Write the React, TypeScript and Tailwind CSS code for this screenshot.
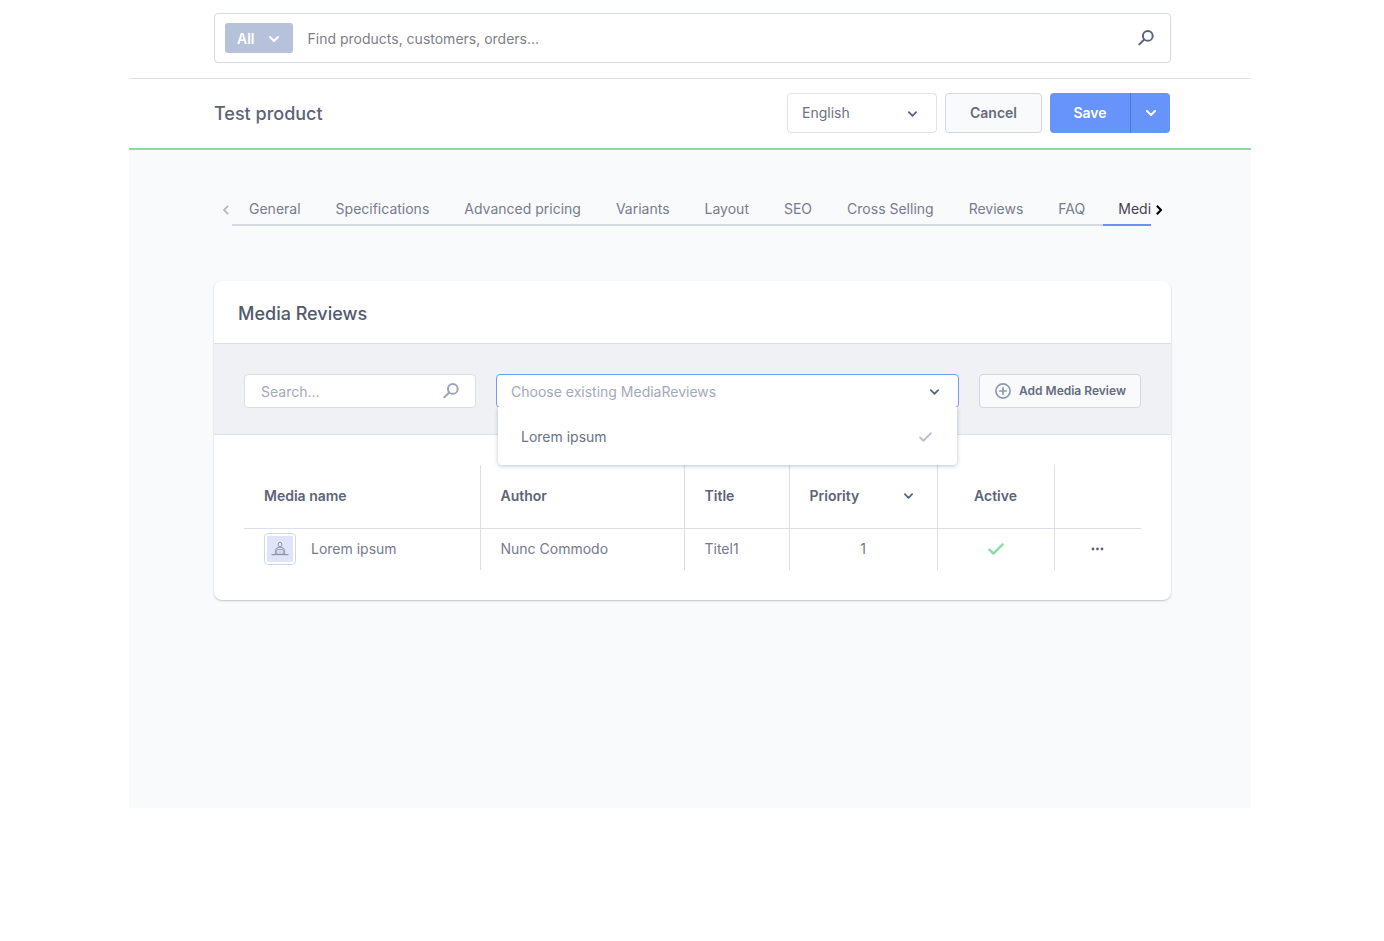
import { useState } from 'react';

type IconProps = {
  className?: string;
};

const TABS = [
  'General',
  'Specifications',
  'Advanced pricing',
  'Variants',
  'Layout',
  'SEO',
  'Cross Selling',
  'Reviews',
  'FAQ',
  'Media Reviews',
];

const ROWS = [
  {
    id: 1,
    name: 'Lorem ipsum',
    author: 'Nunc Commodo',
    title: 'Titel1',
    priority: 1,
    active: true,
  },
];

// =========================
// ICONS
// =========================
function ChevronIcon({ className = '' }: IconProps) {
  return (
    <svg
      viewBox="0 0 10 6"
      className={`pointer-events-none ${className}`}
      fill="none"
      stroke="currentColor"
      strokeWidth="2"
      strokeLinecap="round"
      strokeLinejoin="round"
      aria-hidden="true"
    >
      <path d="M1 1l4 4 4-4" />
    </svg>
  );
}

function SearchIcon({ className = '' }: IconProps) {
  return (
    <svg
      viewBox="0 0 16 16"
      className={className}
      fill="none"
      stroke="currentColor"
      strokeWidth="2"
      strokeLinecap="round"
      aria-hidden="true"
    >
      <circle cx="9.8" cy="5.9" r="4.9" />
      <path d="M6.2 9.5L1.3 14.4" />
    </svg>
  );
}

function ArrowIcon({ className = '' }: IconProps) {
  return (
    <svg
      viewBox="0 0 6 10"
      className={className}
      fill="none"
      stroke="currentColor"
      aria-hidden="true"
    >
      <path d="M0.8 0.8L5 5 0.8 9.2" />
    </svg>
  );
}

function CheckIcon({ className = '' }: IconProps) {
  return (
    <svg
      viewBox="0 0 16 12"
      className={className}
      fill="none"
      stroke="currentColor"
      strokeWidth="2.4"
      strokeLinecap="round"
      strokeLinejoin="round"
      aria-hidden="true"
    >
      <path d="M1.4 6.6l4 4L14.6 1.4" />
    </svg>
  );
}

function PlusCircleIcon({ className = '' }: IconProps) {
  return (
    <svg
      viewBox="0 0 16 16"
      className={className}
      fill="none"
      stroke="currentColor"
      strokeWidth="1.7"
      strokeLinecap="round"
      aria-hidden="true"
    >
      <circle cx="8" cy="8" r="7.1" />
      <path d="M8 4.8v6.4M4.8 8h6.4" />
    </svg>
  );
}

function DotsIcon({ className = '' }: IconProps) {
  return (
    <svg viewBox="0 0 13 4" className={className} fill="currentColor" aria-hidden="true">
      <circle cx="2" cy="2" r="1.4" />
      <circle cx="6.5" cy="2" r="1.4" />
      <circle cx="11" cy="2" r="1.4" />
    </svg>
  );
}

function Thumbnail() {
  return (
    <span className="flex size-8 shrink-0 items-center justify-center rounded border border-[#d3d8e4] bg-white">
      <svg viewBox="0 0 26 26" className="size-[26px]" fill="none" stroke="#8b90a0" aria-hidden="true">
        <rect width="26" height="26" fill="#dfe4fb" stroke="none" />
        <ellipse cx="13" cy="8.6" rx="1.8" ry="2.3" strokeWidth="0.9" />
        <path d="M8.4 18v-3.4c0-2.2 1.8-3.2 4.6-3.2s4.6 1 4.6 3.2V18" strokeWidth="0.9" />
        <rect x="9.8" y="13.6" width="6.4" height="4.6" strokeWidth="0.8" />
        <path d="M4.6 18.6h16.8" strokeWidth="1.1" />
        <path d="M13 15.3v1.2" strokeWidth="0.9" />
      </svg>
    </span>
  );
}

// =========================
// PAGE PARTS
// =========================
function SearchBar() {
  return (
    <header className="border-b border-[#dcdfe7] pt-[13px] pr-20 pb-[15px] pl-[85px]">
      <form className="flex h-[50px] items-center rounded border border-[#d6dae3] bg-white pr-4 pl-[10px]">
        <button
          type="button"
          className="flex h-[30px] items-center gap-[14px] rounded-[3px] bg-[#b6c2da] px-3 pt-px text-sm font-semibold text-white"
        >
          All
          <ChevronIcon className="mr-[2px] h-[6px] w-[10px]" />
        </button>
        <input
          type="text"
          aria-label="Find products, customers, orders"
          placeholder="Find products, customers, orders..."
          className="ml-[15px] h-[30px] min-w-0 flex-1 text-sm text-[#5c647a] outline-none placeholder:text-[#7d7f85]"
        />
        <button type="submit" aria-label="Search" className="text-[#5c6479]">
          <SearchIcon className="size-4" />
        </button>
      </form>
    </header>
  );
}

function PageHead() {
  return (
    <div className="flex h-[71px] items-center gap-2 border-b-2 border-[#8bdca4] pr-[81px] pb-px pl-[85px]">
      <h1 className="flex-1 pt-px text-lg font-medium text-[#5c6479]">Test product</h1>
      <div className="relative">
        <select
          aria-label="Language"
          className="h-10 w-[150px] appearance-none rounded border border-[#dfe2ea] bg-white px-[14px] text-sm text-[#6a7186]"
        >
          <option>English</option>
          <option>Deutsch</option>
        </select>
        <ChevronIcon className="absolute top-[18px] right-5 h-[6px] w-[9px] text-[#5c6479]" />
      </div>
      <button
        type="button"
        className="h-10 w-[97px] rounded border border-[#d3d7e1] bg-[#f9fafc] text-sm font-semibold text-[#666c80]"
      >
        Cancel
      </button>
      <div className="flex h-10 overflow-hidden rounded bg-[#6694fb] text-white">
        <button type="button" className="w-[81px] border-r border-[#5277cf] text-sm font-semibold">
          Save
        </button>
        <button type="button" aria-label="More save options" className="flex w-[39px] items-center justify-center">
          <ChevronIcon className="h-[6px] w-[10px]" />
        </button>
      </div>
    </div>
  );
}

function Tabs() {
  return (
    <nav className="flex items-end">
      <button
        type="button"
        aria-label="Previous tabs"
        className="flex h-8 w-[18px] items-center justify-center pl-[6px] text-[#b3b5ba]"
      >
        <ArrowIcon className="h-[10px] w-[6px] rotate-180 stroke-[1.7]" />
      </button>
      <div className="flex h-9 min-w-0 flex-1 gap-px overflow-hidden shadow-[inset_0_-2px_0_#d5d9e0]">
        {TABS.map((tab, i) => (
          <a
            key={tab}
            href="#"
            className={
              i === TABS.length - 1
                ? 'border-b-2 border-[#6694fb] px-[15px] pt-[9px] text-sm whitespace-nowrap text-[#4a3f52]'
                : 'px-[17px] pt-[9px] text-sm whitespace-nowrap text-[#777c8f]'
            }
          >
            {tab}
          </a>
        ))}
      </div>
      <button
        type="button"
        aria-label="Next tabs"
        className="flex h-8 w-5 items-center justify-center pr-1 text-black"
      >
        <ArrowIcon className="h-[10px] w-[6px] stroke-2" />
      </button>
    </nav>
  );
}

function ReviewSelect() {
  return (
    <div className="relative min-w-0 flex-1">
      <input
        type="text"
        role="combobox"
        aria-expanded="true"
        aria-controls="review-options"
        aria-label="Choose existing MediaReviews"
        placeholder="Choose existing MediaReviews"
        className="h-[34px] w-full rounded border border-[#6f9bfb] bg-white pr-10 pl-[14px] text-sm text-[#5c6479] outline-none placeholder:text-[#a3a9ba]"
      />
      <ChevronIcon className="absolute top-[15px] right-5 h-[6px] w-[9px] text-[#5c6479]" />

      {/* RESULT LIST */}
      <ul
        id="review-options"
        role="listbox"
        className="absolute inset-x-[2px] top-[33px] z-10 rounded-b bg-white pt-[9px] pb-[7px] shadow-[0_1px_4px_rgba(90,105,145,0.4)] [clip-path:inset(0_-8px_-8px_-8px)]"
      >
        <li
          role="option"
          aria-selected="true"
          className="flex h-[42px] items-center justify-between pr-[25px] pl-[23px] text-sm text-[#6a7186]"
        >
          Lorem ipsum
          <CheckIcon className="h-[10px] w-[13px] text-[#b9c1d2]" />
        </li>
      </ul>
    </div>
  );
}

function ReviewTable() {
  const [ascending, setAscending] = useState(false);
  const rows = [...ROWS].sort((a, b) =>
    ascending ? a.priority - b.priority : b.priority - a.priority
  );

  return (
    <table className="w-full table-fixed text-left text-sm">
      <colgroup>
        <col />
        <col className="w-[204px]" />
        <col className="w-[105px]" />
        <col className="w-[148px]" />
        <col className="w-[117px]" />
        <col className="w-[87px]" />
      </colgroup>
      <thead className="text-[#5c6479] [&_th]:font-semibold">
        <tr className="h-[63px] border-b border-[#dcdfe7]">
          <th className="border-r border-[#dcdfe7] px-5">Media name</th>
          <th className="border-r border-[#dcdfe7] px-5">Author</th>
          <th className="border-r border-[#dcdfe7] px-5">Title</th>
          <th className="border-r border-[#dcdfe7] pr-6 pl-5">
            <button
              type="button"
              onClick={() => setAscending(!ascending)}
              className="flex w-full items-center justify-between"
            >
              Priority
              <ChevronIcon className="h-[6px] w-[9px]" />
            </button>
          </th>
          <th className="border-r border-[#dcdfe7] text-center">Active</th>
          <th aria-label="Actions" />
        </tr>
      </thead>
      <tbody className="text-[#757a8e]">
        {rows.map((row) => (
          <tr key={row.id} className="h-[42px]">
            <td className="border-r border-[#dcdfe7] px-5">
              <div className="flex items-center gap-[15px]">
                <Thumbnail />
                {row.name}
              </div>
            </td>
            <td className="border-r border-[#dcdfe7] px-5">{row.author}</td>
            <td className="border-r border-[#dcdfe7] px-5">{row.title}</td>
            <td className="border-r border-[#dcdfe7] text-center">{row.priority}</td>
            <td className="border-r border-[#dcdfe7]">
              {row.active && <CheckIcon className="mx-auto h-3 w-4 text-[#8bdca4]" />}
            </td>
            <td>
              <button type="button" aria-label="Row actions" className="mx-auto block text-[#5c6479]">
                <DotsIcon className="h-1 w-[13px]" />
              </button>
            </td>
          </tr>
        ))}
      </tbody>
    </table>
  );
}

export default function App() {
  return (
    <div className="min-h-screen bg-white pr-[133px] pl-[129px] font-['Inter',sans-serif]">

      <SearchBar />
      <PageHead />

      <main className="bg-[#f9fafc] pt-10 pr-20 pb-[208px] pl-[85px]">

        <Tabs />

        <section className="mt-[55px] rounded-lg bg-white shadow-[0_1px_2px_rgba(0,0,0,0.22)]">

          <h2 className="flex h-[62px] items-center px-6 pt-1 text-lg font-medium text-[#515a6e]">
            Media Reviews
          </h2>

          {/* TOOLBAR */}
          <div className="flex gap-5 border-y border-[#dcdfe7] bg-[#f0f1f5] px-[30px] pt-[30px] pb-[26px]">
            <div className="flex h-[34px] w-[232px] items-center rounded border border-[#d9dde6] bg-white px-4">
              <input
                type="search"
                aria-label="Search"
                placeholder="Search..."
                className="h-full min-w-0 flex-1 pt-px text-sm text-[#5c6479] outline-none placeholder:text-[#a3a9ba]"
              />
              <SearchIcon className="size-4 text-[#9ba4b8]" />
            </div>
            <ReviewSelect />
            <button
              type="button"
              className="flex h-[34px] items-center gap-2 rounded border border-[#d3d7e1] bg-[#f9fafc] pr-[14px] pl-[15px] text-xs font-semibold text-[#666c80]"
            >
              <PlusCircleIcon className="size-4 text-[#8f99b0]" />
              Add Media Review
            </button>
          </div>

          {/* LIST */}
          <div className="p-[30px]">
            <ReviewTable />
          </div>

        </section>

      </main>

    </div>
  );
}
